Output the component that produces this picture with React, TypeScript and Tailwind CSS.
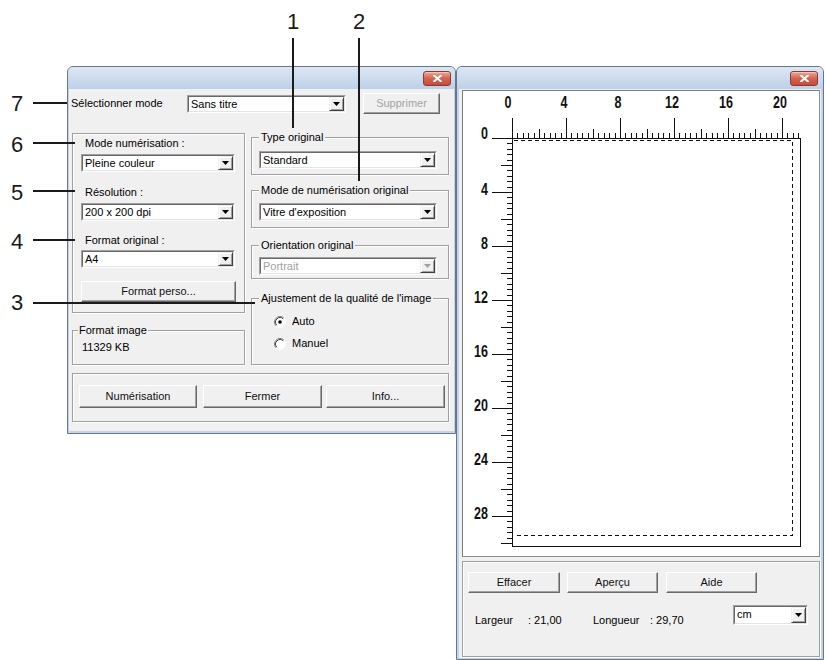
import React from "react";

function Arrow({ disabled = false }: { disabled?: boolean }) {
  return (
    <div className="w-[15px] h-full flex items-center justify-center bg-[#f0f0f0] border border-t-[#f0f0f0] border-l-[#f0f0f0] border-r-[#404040] border-b-[#404040] shadow-[inset_1px_1px_0_#fff,inset_-1px_-1px_0_#a0a0a0]">
      <svg width="7" height="4" viewBox="0 0 7 4">
        <polygon points="0,0 7,0 3.5,4" fill={disabled ? "#a0a0a0" : "#000"} />
      </svg>
    </div>
  );
}

function Combo({
  text,
  className = "",
  disabled = false,
}: {
  text: string;
  className?: string;
  disabled?: boolean;
}) {
  return (
    <div
      className={
        "flex h-[18px] border border-t-[#a0a0a0] border-l-[#a0a0a0] border-r-white border-b-white " +
        className
      }
    >
      <div className="flex flex-1 min-w-0 border border-t-[#696969] border-l-[#696969] border-r-[#e3e3e3] border-b-[#e3e3e3] bg-white">
        <span
          className={
            "flex-1 min-w-0 pl-[2px] leading-[14px] whitespace-nowrap overflow-hidden " +
            (disabled ? "text-[#a0a0a0]" : "text-black")
          }
        >
          {text}
        </span>
        <Arrow disabled={disabled} />
      </div>
    </div>
  );
}

function Btn({
  children,
  className = "",
  disabled = false,
}: {
  children: React.ReactNode;
  className?: string;
  disabled?: boolean;
}) {
  return (
    <div
      className={
        "flex items-center justify-center bg-[#f0f0f0] border border-t-white border-l-white border-r-[#696969] border-b-[#696969] shadow-[inset_-1px_-1px_0_#a0a0a0] " +
        (disabled ? "text-[#a3a3a3] " : "text-[#111] ") +
        className
      }
    >
      {children}
    </div>
  );
}

function Radio({ checked }: { checked: boolean }) {
  return (
    <svg width="12" height="12" viewBox="0 0 12 12">
      <circle cx="6" cy="6" r="5" fill="#fff" />
      <path d="M2.11 9.89 A5.5 5.5 0 0 1 9.89 2.11" fill="none" stroke="#808080" strokeWidth="1" />
      <path d="M2.82 9.18 A4.5 4.5 0 0 1 9.18 2.82" fill="none" stroke="#404040" strokeWidth="1" />
      <path d="M9.89 2.11 A5.5 5.5 0 0 1 2.11 9.89" fill="none" stroke="#ffffff" strokeWidth="1" />
      {checked && <circle cx="6" cy="6" r="1.8" fill="#000" />}
    </svg>
  );
}

function Close({ className = "" }: { className?: string }) {
  return (
    <div
      className={
        "mt-[4px] w-[28px] h-[15px] rounded-[3px] border border-[#8a3b30] bg-linear-to-b from-[#eaa99b] via-[#d5624e] to-[#c44c3a] flex items-center justify-center shadow-[inset_0_1px_0_#f3c4b9] " +
        className
      }
    >
      <svg width="9" height="7" viewBox="0 0 9 7">
        <path d="M1 0.5 L8 6.5 M8 0.5 L1 6.5" stroke="#fff" strokeWidth="2" strokeLinecap="square" />
      </svg>
    </div>
  );
}

const etched =
  "border border-[#a0a0a0] shadow-[inset_1px_1px_0_#fff,1px_1px_0_#fff]";

function LeftWindow() {
  return (
    <div className="absolute left-[67px] top-[66px] w-[389px] h-[368px] flex flex-col border border-[#66778d] rounded-t-[6px] bg-[#c4d4e8]">
      <div className="h-[22px] flex justify-end rounded-t-[5px] bg-linear-to-b from-[#dde7f3] to-[#bdd0e8]">
        <Close className="mr-[4px]" />
      </div>
      <div className="flex-1 mx-[1px] mb-[2px] bg-[#f0f0f0] flex flex-col">
        <div className="mt-[4px] h-[21px] flex items-center">
          <span className="w-[118px] pl-[2px]">Sélectionner mode</span>
          <Combo className="w-[159px]" text="Sans titre" />
          <Btn className="ml-[17px] w-[77px] h-[21px]" disabled>
            Supprimer
          </Btn>
        </div>

        <div className="mt-[17px] pl-[3px] flex gap-[6px] items-start">
          <div className="w-[173px] mt-[2px] flex flex-col">
            <div className={etched + " flex flex-col pl-[8px] pt-[3px] pb-[10px]"}>
              <span className="ml-[4px]">Mode numérisation :</span>
              <Combo className="mt-[4px] w-[154px]" text="Pleine couleur" />
              <span className="ml-[4px] mt-[14px]">Résolution :</span>
              <Combo className="mt-[4px] w-[154px]" text="200 x 200 dpi" />
              <span className="ml-[4px] mt-[13px]">Format original :</span>
              <Combo className="mt-[3px] w-[154px]" text="A4" />
              <Btn className="mt-[13px] w-[155px] h-[21px]">Format perso...</Btn>
            </div>
            <fieldset className={etched + " mt-[11px] pl-[9px] pb-[10px]"}>
              <legend className="-ml-[4px] px-[1px] leading-[13px] bg-[#f0f0f0]">Format image</legend>
              <div className="mt-[4px]">11329 KB</div>
            </fieldset>
          </div>

          <div className="w-[198px] flex flex-col">
            <fieldset className={etched + " pl-[7px] pb-[5px]"}>
              <legend className="px-[2px] leading-[13px] bg-[#f0f0f0]">Type original</legend>
              <Combo className="mt-[7px] w-[178px]" text="Standard" />
            </fieldset>
            <fieldset className={etched + " mt-[9px] pl-[7px] pb-[6px]"}>
              <legend className="px-[2px] leading-[13px] bg-[#f0f0f0]">Mode de numérisation original</legend>
              <Combo className="mt-[6px] w-[178px]" text="Vitre d'exposition" />
            </fieldset>
            <fieldset className={etched + " mt-[11px] pl-[7px] pb-[3px]"}>
              <legend className="px-[2px] leading-[13px] bg-[#f0f0f0]">Orientation original</legend>
              <Combo className="mt-[5px] w-[178px]" text="Portrait" disabled />
            </fieldset>
            <fieldset className={etched + " mt-[13px] pl-[7px] pb-[14px]"}>
              <legend className="px-[2px] leading-[13px] bg-[#f0f0f0]">Ajustement de la qualité de l'image</legend>
              <div className="mt-[10px] ml-[15px] h-[13px] flex items-center gap-[6px]">
                <Radio checked />
                <span>Auto</span>
              </div>
              <div className="mt-[9px] ml-[15px] h-[13px] flex items-center gap-[6px]">
                <Radio checked={false} />
                <span>Manuel</span>
              </div>
            </fieldset>
          </div>
        </div>

        <div className={etched + " mt-[8px] ml-[3px] w-[377px] pt-[11px] pb-[13px] pl-[6px] flex"}>
          <Btn className="w-[118px] h-[23px]">Numérisation</Btn>
          <Btn className="ml-[6px] w-[119px] h-[23px]">Fermer</Btn>
          <Btn className="ml-[4px] w-[119px] h-[23px]">Info...</Btn>
        </div>
      </div>
    </div>
  );
}

function Ruler() {
  const s = 13.5;
  const x0 = 49;
  const y0 = 47;
  const step = 0.4 * s;
  const els: React.ReactNode[] = [];
  for (let k = 0; k <= 53; k++) {
    const x = Math.round(x0 + k * step) + 0.5;
    const h = k % 10 === 0 ? 20 : k % 5 === 0 ? 9 : 5;
    els.push(<line key={"h" + k} x1={x} y1={y0 - h} x2={x} y2={y0 + 0.5} />);
  }
  for (let k = 0; k <= 75; k++) {
    const y = Math.round(y0 + k * step) + 0.5;
    const l = k % 10 === 0 ? 20 : k % 5 === 0 ? 11 : 5;
    els.push(<line key={"v" + k} x1={x0 - l} y1={y} x2={x0 + 0.5} y2={y} />);
  }
  const font = "'Liberation Sans', Arial, sans-serif";
  return (
    <svg width="356" height="465" viewBox="0 0 356 465" className="block">
      <g stroke="#111" strokeWidth="1" shapeRendering="crispEdges">
        {els}
        <line x1={x0 + 0.5} y1={y0 + 0.5} x2={337.5} y2={y0 + 0.5} />
        <line x1={x0 + 0.5} y1={y0} x2={x0 + 0.5} y2={456} />
        <line x1={337.5} y1={y0} x2={337.5} y2={455.5} />
        <line x1={x0} y1={455.5} x2={337.5} y2={455.5} />
        <path
          d={`M${x0 + 2} ${y0 + 2.5} H329.5 V444.5 H${x0 + 2}`}
          fill="none"
          strokeDasharray="4 3"
        />
      </g>
      <g fill="#111" fontFamily={font} fontWeight="bold" fontSize="16.5">
        {[0, 4, 8, 12, 16, 20].map((n) => (
          <text
            key={"t" + n}
            transform={`translate(${x0 + n * s - (n === 0 ? 4 : 2)} 17) scale(0.76 1)`}
            textAnchor="middle"
          >
            {n}
          </text>
        ))}
        {[0, 4, 8, 12, 16, 20, 24, 28].map((n) => (
          <text
            key={"l" + n}
            transform={`translate(25 ${n === 0 ? y0 + 1 : y0 + n * s + 3}) scale(0.76 1)`}
            textAnchor="end"
          >
            {n}
          </text>
        ))}
      </g>
    </svg>
  );
}

function RightWindow() {
  return (
    <div className="absolute left-[456px] top-[66px] w-[368px] h-[594px] flex flex-col border border-[#66778d] rounded-t-[6px] bg-[#c4d4e8]">
      <div className="h-[22px] flex justify-end rounded-t-[5px] bg-linear-to-b from-[#dde7f3] to-[#bdd0e8]">
        <Close className="mr-[5px]" />
      </div>
      <div className="flex-1 mx-[2px] mb-[1px] bg-[#f0f0f0] flex flex-col pl-[3px]">
        <div className="mt-[1px] w-[358px] h-[467px] bg-white border border-t-[#7a7a7a] border-l-[#7a7a7a] border-r-[#8c8c8c] border-b-[#8c8c8c]">
          <Ruler />
        </div>
        <div className={etched + " mt-[4px] w-[358px] h-[96px] flex flex-col pt-[10px] pl-[5px]"}>
          <div className="flex">
            <Btn className="w-[92px] h-[21px]">Effacer</Btn>
            <Btn className="ml-[7px] w-[91px] h-[21px]">Aperçu</Btn>
            <Btn className="ml-[8px] w-[91px] h-[21px]">Aide</Btn>
          </div>
          <div className="mt-[12px] pl-[7px] flex items-start">
            <span className="mt-[9px] w-[53px]">Largeur</span>
            <span className="mt-[9px] w-[65px]">: 21,00</span>
            <span className="mt-[9px] w-[57px]">Longueur</span>
            <span className="mt-[9px] w-[83px]">: 29,70</span>
            <Combo className="w-[75px] h-[20px]" text="cm" />
          </div>
        </div>
      </div>
    </div>
  );
}

function Callouts() {
  const num = "absolute text-[22px] leading-none text-[#1a1a1a]";
  const hline = "absolute h-[2px] bg-[#1a1a1a]";
  return (
    <>
      <span className={num + " left-[11px] top-[93px]"}>7</span>
      <div className={hline + " left-[33px] top-[102px] w-[34px]"} />
      <span className={num + " left-[11px] top-[134px]"}>6</span>
      <div className={hline + " left-[33px] top-[142px] w-[42px]"} />
      <span className={num + " left-[11px] top-[182px]"}>5</span>
      <div className={hline + " left-[33px] top-[190px] w-[42px]"} />
      <span className={num + " left-[11px] top-[231px]"}>4</span>
      <div className={hline + " left-[33px] top-[239px] w-[42px]"} />
      <span className={num + " left-[11px] top-[292px]"}>3</span>
      <div className={hline + " left-[33px] top-[302px] w-[222px]"} />
      <span className={num + " left-[287px] top-[11px]"}>1</span>
      <div className="absolute left-[292px] top-[38px] w-[2px] h-[90px] bg-[#1a1a1a]" />
      <span className={num + " left-[353px] top-[11px]"}>2</span>
      <div className="absolute left-[358px] top-[38px] w-[2px] h-[143px] bg-[#1a1a1a]" />
    </>
  );
}

export default function App() {
  return (
    <div className="relative w-[826px] h-[660px] bg-white overflow-hidden font-['Liberation_Sans',Arial,sans-serif] text-[11px] leading-[13px] text-black">
      <LeftWindow />
      <RightWindow />
      <Callouts />
    </div>
  );
}
